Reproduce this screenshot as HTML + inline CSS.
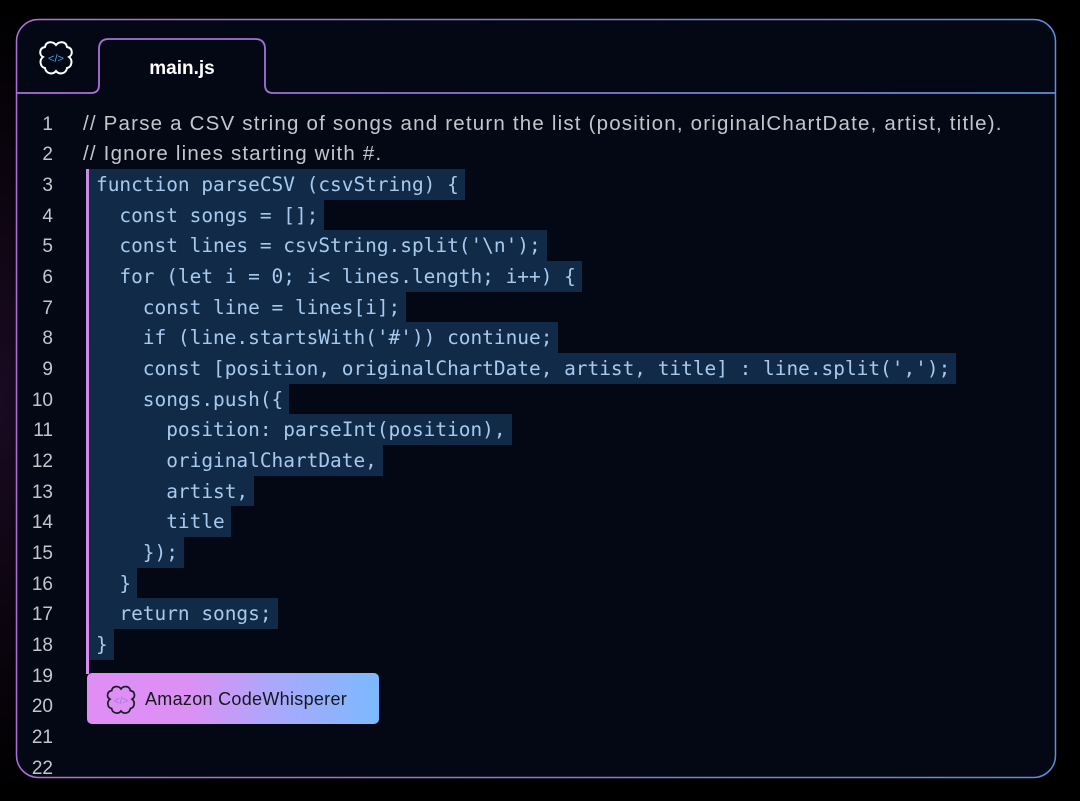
<!DOCTYPE html>
<html><head><meta charset="utf-8"><style>
html,body{margin:0;padding:0;background:#000;}
body{width:1080px;height:801px;position:relative;overflow:hidden;background:radial-gradient(ellipse 120px 400px at 0 400px,#1a0a22 0%,#000 100%);}
.panel{position:absolute;left:16px;top:19px;width:1040px;height:759px;border-radius:22px;background:#040815;}
svg.frame{position:absolute;left:0;top:0;}
.ln{position:absolute;left:20px;width:33px;text-align:right;font:19px "Liberation Sans",sans-serif;line-height:34px;color:#c4c6cc;}
.cm{position:absolute;left:83px;font:20.5px "Liberation Sans",sans-serif;line-height:32px;color:#c4c6cc;white-space:pre;letter-spacing:1.2px;}
.cd{position:absolute;left:88px;height:30.67px;font:19.45px "DejaVu Sans Mono",monospace;line-height:31.5px;color:#a8c9ee;background:#112a48;white-space:pre;padding:0 6px 0 8px;}
.bar{position:absolute;left:86px;top:169px;width:3px;height:505px;background:linear-gradient(#c98ae8,#d88cf0);}
.badge{position:absolute;left:87px;top:673px;width:292px;height:51px;border-radius:5px;background:linear-gradient(90deg,#e08ef6 0%,#dc90f4 35%,#aaa8fb 65%,#7cb9ff 100%);}
.badge .t{position:absolute;left:58px;top:0;font:18px "Liberation Sans",sans-serif;line-height:53px;color:#16181f;letter-spacing:0.3px;}
.tab{position:absolute;left:99px;top:39px;width:166px;height:54px;text-align:center;font:bold 19px "Liberation Sans",sans-serif;line-height:60px;color:#fff;}
</style></head><body>
<div class="panel"></div>
<svg class="frame" width="1080" height="801">
<defs>
<linearGradient id="g" x1="0" y1="0" x2="1" y2="0">
<stop offset="0" stop-color="#b06fdc"/><stop offset="0.5" stop-color="#8a78d8"/><stop offset="1" stop-color="#5b8fe0"/>
</linearGradient>
</defs>
<rect x="16.5" y="19.5" width="1039" height="758" rx="22" fill="none" stroke="url(#g)" stroke-width="1.5"/>
<path d="M16.5 93 H91 Q99 93 99 85 V49 Q99 39 109 39 H255 Q265 39 265 49 V85 Q265 93 273 93 H1056" fill="none" stroke="url(#g)" stroke-width="1.8"/>
<g transform="translate(56,58)" fill="none" stroke="#fff" stroke-width="2">
<path d="M0 -13 C-3 -17 -10 -17 -11 -11 C-17 -10 -17 -3 -13 -1 C-17 2 -16 9 -11 10 C-10 16 -3 17 0 13 C3 17 10 16 11 10 C16 9 17 2 13 -1 C17 -3 17 -10 11 -11 C10 -17 3 -17 0 -13 Z"/>
</g>
<text x="56" y="62" text-anchor="middle" font-family="Liberation Sans" font-size="11" fill="#4aa3e8">&lt;/&gt;</text>
</svg>
<div class="tab">main.js</div>

<div class="ln" style="top:107.7px">1</div>
<div class="ln" style="top:138.3px">2</div>
<div class="ln" style="top:169px">3</div>
<div class="ln" style="top:199.7px">4</div>
<div class="ln" style="top:230.4px">5</div>
<div class="ln" style="top:261px">6</div>
<div class="ln" style="top:291.7px">7</div>
<div class="ln" style="top:322.4px">8</div>
<div class="ln" style="top:353px">9</div>
<div class="ln" style="top:383.7px">10</div>
<div class="ln" style="top:414.4px">11</div>
<div class="ln" style="top:445px">12</div>
<div class="ln" style="top:475.7px">13</div>
<div class="ln" style="top:506.4px">14</div>
<div class="ln" style="top:537px">15</div>
<div class="ln" style="top:567.7px">16</div>
<div class="ln" style="top:598.4px">17</div>
<div class="ln" style="top:629px">18</div>
<div class="ln" style="top:659.7px">19</div>
<div class="ln" style="top:690.4px">20</div>
<div class="ln" style="top:721px">21</div>
<div class="ln" style="top:751.7px">22</div>

<div class="cm" style="top:107.7px">// Parse a CSV string of songs and return the list (position, originalChartDate, artist, title).</div>
<div class="cm" style="top:138.3px">// Ignore lines starting with #.</div>

<div class="cd" style="top:169px">function parseCSV (csvString) {</div>
<div class="cd" style="top:199.7px">  const songs = [];</div>
<div class="cd" style="top:230.4px">  const lines = csvString.split('\n');</div>
<div class="cd" style="top:261px">  for (let i = 0; i&lt; lines.length; i++) {</div>
<div class="cd" style="top:291.7px">    const line = lines[i];</div>
<div class="cd" style="top:322.4px">    if (line.startsWith('#')) continue;</div>
<div class="cd" style="top:353px">    const [position, originalChartDate, artist, title] : line.split(',');</div>
<div class="cd" style="top:383.7px">    songs.push({</div>
<div class="cd" style="top:414.4px">      position: parseInt(position),</div>
<div class="cd" style="top:445px">      originalChartDate,</div>
<div class="cd" style="top:475.7px">      artist,</div>
<div class="cd" style="top:506.4px">      title</div>
<div class="cd" style="top:537px">    });</div>
<div class="cd" style="top:567.7px">  }</div>
<div class="cd" style="top:598.4px">  return songs;</div>
<div class="cd" style="top:629px">}</div>
<div class="bar"></div>
<div class="badge"><span class="t">Amazon CodeWhisperer</span>
<svg style="position:absolute;left:0;top:0" width="60" height="51"><g transform="translate(34,27) scale(0.85)" fill="none" stroke="#1a1a24" stroke-width="2"><path d="M0 -13 C-3 -17 -10 -17 -11 -11 C-17 -10 -17 -3 -13 -1 C-17 2 -16 9 -11 10 C-10 16 -3 17 0 13 C3 17 10 16 11 10 C16 9 17 2 13 -1 C17 -3 17 -10 11 -11 C10 -17 3 -17 0 -13 Z"/></g><text x="34" y="31" text-anchor="middle" font-family="Liberation Sans" font-size="10" fill="#9a7ad8">&lt;/&gt;</text></svg>
</div>
</body></html>
